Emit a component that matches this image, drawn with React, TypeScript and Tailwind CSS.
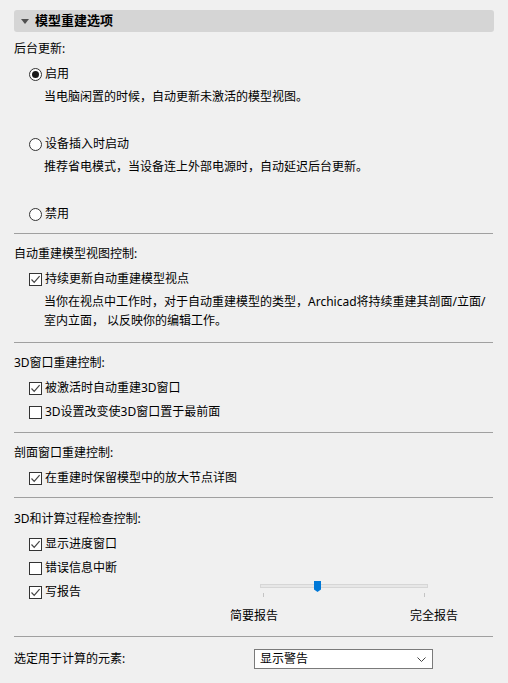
import React from "react";

const Radio: React.FC<{ checked?: boolean }> = ({ checked }) => (
  <span className="w-[13px] h-[13px] rounded-full border border-[#333] bg-white flex items-center justify-center shrink-0">
    {checked && <span className="w-[7px] h-[7px] rounded-full bg-[#1a1a1a]" />}
  </span>
);

const Check: React.FC<{ checked?: boolean }> = ({ checked }) => (
  <span className="w-[13px] h-[13px] border border-[#333] bg-white flex items-center justify-center shrink-0">
    {checked && (
      <svg width="11" height="11" viewBox="0 0 11 11">
        <path d="M1.5 5.5 L4.2 8.3 L9.6 2.2" fill="none" stroke="#444" strokeWidth="1.2" />
      </svg>
    )}
  </span>
);

const Label: React.FC<{ text: string; className?: string }> = ({ text, className }) => (
  <div className={"h-[24px] flex items-center " + (className || "")}>{text}</div>
);

const RadioRow: React.FC<{ text: string; checked?: boolean }> = ({ text, checked }) => (
  <div className="h-[24px] flex items-center pl-[15px] gap-[3px]">
    <Radio checked={checked} />
    <span>{text}</span>
  </div>
);

const CheckRow: React.FC<{ text: string; checked?: boolean; className?: string }> = ({
  text,
  checked,
  className,
}) => (
  <div className={"h-[24px] flex items-center pl-[15px] gap-[3px] " + (className || "")}>
    <Check checked={checked} />
    <span>{text}</span>
  </div>
);

const Sep: React.FC<{ className: string }> = ({ className }) => (
  <div className={"h-px bg-[#a0a0a0] w-[479px] " + className} />
);

const App: React.FC = () => {
  return (
    <div
      className="w-[508px] h-[683px] bg-[#f0f0f0] text-[12px] text-black overflow-hidden"
      style={{ fontFamily: '"Noto Sans", "Noto Sans CJK SC", sans-serif' }}
    >
      <div className="px-[14px] pt-[10px]">
        <div className="h-[22px] w-[480px] bg-[#d5d5d5] rounded-[3px] flex items-center pl-[7px] gap-[6px]">
          <svg width="8" height="5" viewBox="0 0 8 5">
            <path d="M0 0 L8 0 L4 5 Z" fill="#505050" />
          </svg>
          <span className="font-bold text-[13px]">模型重建选项</span>
        </div>

        <Label text="后台更新:" className="mt-[5px]" />
        <div className="mt-[1px]">
          <RadioRow text="启用" checked />
        </div>
        <Label text="当电脑闲置的时候，自动更新未激活的模型视图。" className="-mt-px pl-[30px]" />
        <div className="mt-[23px]">
          <RadioRow text="设备插入时启动" />
        </div>
        <Label text="推荐省电模式，当设备连上外部电源时，自动延迟后台更新。" className="-mt-px pl-[30px]" />
        <div className="mt-[23px]">
          <RadioRow text="禁用" />
        </div>
        <Sep className="mt-[7px]" />

        <Label text="自动重建模型视图控制:" className="mt-[8px]" />
        <div className="mt-[1px]">
          <CheckRow text="持续更新自动重建模型视点" checked />
        </div>
        <div className="mt-[1px] pl-[30px] leading-[19px] whitespace-nowrap">
          当你在视点中工作时，对于自动重建模型的类型，Archicad将持续重建其剖面/立面/
          <br />
          室内立面， 以反映你的编辑工作。
        </div>
        <Sep className="mt-[12px]" />

        <Label text="3D窗口重建控制:" className="mt-[8px]" />
        <div className="mt-[1px]">
          <CheckRow text="被激活时自动重建3D窗口" checked />
        </div>
        <CheckRow text="3D设置改变使3D窗口置于最前面" />
        <Sep className="mt-[8px]" />

        <Label text="剖面窗口重建控制:" className="mt-[8px]" />
        <div className="mt-[1px]">
          <CheckRow text="在重建时保留模型中的放大节点详图" checked />
        </div>
        <Sep className="mt-[7px]" />

        <Label text="3D和计算过程检查控制:" className="mt-[9px]" />
        <div className="mt-[1px]">
          <CheckRow text="显示进度窗口" checked />
        </div>
        <CheckRow text="错误信息中断" />
        <div className="flex">
          <CheckRow text="写报告" checked className="w-[246px]" />
          <div className="pt-[4px]">
            <div className="relative w-[168px] h-[4px] bg-[#e7e7e7] border border-[#d6d6d6]">
              <div className="absolute left-[53px] -top-[4px] w-[7px] h-[11px]">
                <svg width="7" height="11" viewBox="0 0 7 11">
                  <path d="M0 0 H7 V8.5 L3.5 11 L0 8.5 Z" fill="#0078d7" />
                </svg>
              </div>
            </div>
            <div className="flex justify-between px-[3px] mt-[5px]">
              <span className="w-px h-[4px] bg-[#c4c4c4]" />
              <span className="w-px h-[4px] bg-[#c4c4c4]" />
            </div>
          </div>
        </div>
        <div className="h-[24px] flex items-center">
          <span className="ml-[216px]">简要报告</span>
          <span className="ml-[132px]">完全报告</span>
        </div>
        <Sep className="mt-[8px]" />

        <div className="mt-[10px] h-[24px] flex items-center">
          <span className="w-[240px]">选定用于计算的元素:</span>
          <div className="w-[179px] h-[20px] bg-white border border-[#7a7a7a] flex items-center justify-between pl-[5px] pr-[6px]">
            <span>显示警告</span>
            <svg width="9" height="5" viewBox="0 0 9 5">
              <path d="M0.5 0.5 L4.5 4.5 L8.5 0.5" fill="none" stroke="#444" strokeWidth="1" />
            </svg>
          </div>
        </div>
      </div>
    </div>
  );
};

export default App;
